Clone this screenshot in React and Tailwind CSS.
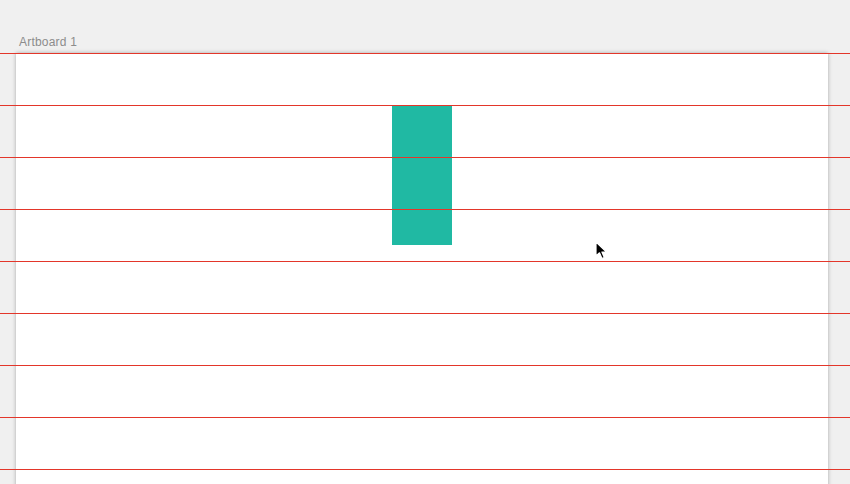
import React from 'react';

const guides = [0, 1, 2, 3, 4, 5, 6, 7, 8];

const Cursor = () => (
  <svg width="14" height="20" viewBox="0 0 14 20" className="absolute left-[595px] top-[241px]">
    <path d="M1 1 L1 15 L4.5 11.8 L7 17.5 L9.3 16.5 L6.9 11 L11.5 11 Z" fill="#000" stroke="#fff" strokeWidth="1.2" strokeLinejoin="round" />
  </svg>
);

export default function App() {
  return (
    <div className="relative h-[484px] w-[850px] overflow-hidden bg-[#f0f0f0]" style={{ fontFamily: '"Liberation Sans", Arial, sans-serif' }}>
      <div className="pl-[19px] pt-[35px] text-[12px] leading-[14px] tracking-[0.2px] text-[#8c8c8c]">Artboard 1</div>
      <div className="ml-[16px] mt-[4px] h-[440px] w-[812px] bg-white shadow-[0_0_4px_rgba(0,0,0,0.3)] pt-[52px]">
        <div className="ml-[376px] h-[140px] w-[60px] bg-[#20b9a3]" />
      </div>

      {/* guide lines */}
      <div className="absolute inset-x-0 top-[53px] flex flex-col">
        {guides.map((g) => (
          <div key={g} className="h-[52px] border-t border-[#e3362a]" />
        ))}
      </div>

      <Cursor />
    </div>
  );
}
